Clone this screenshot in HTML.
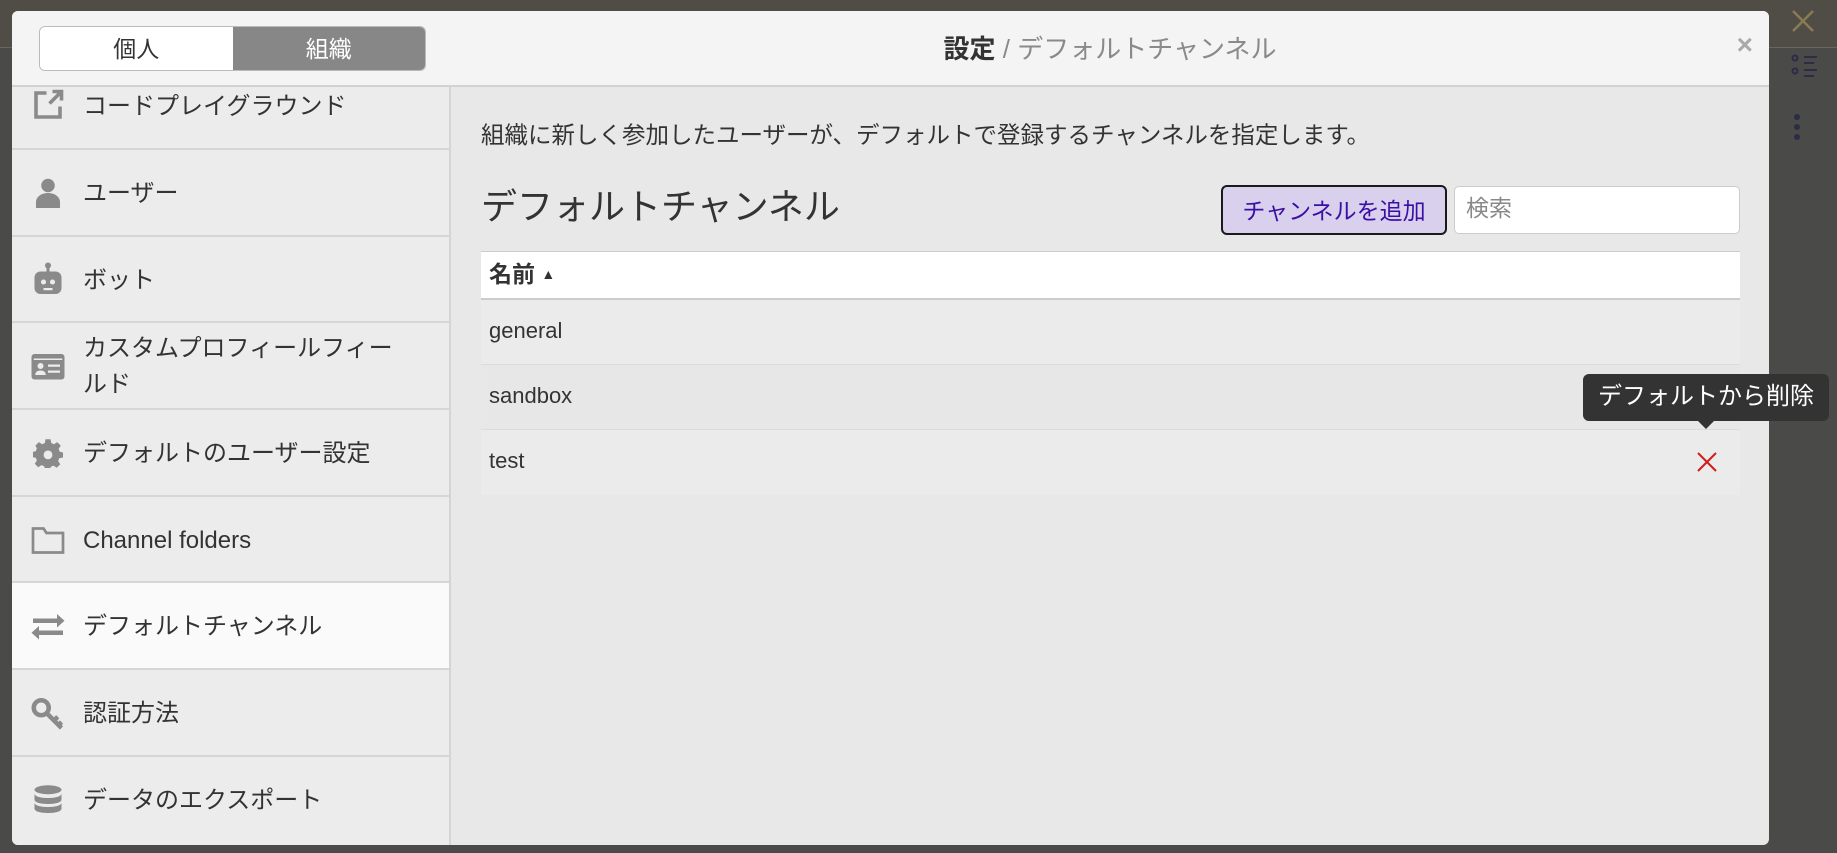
<!DOCTYPE html>
<html><head><meta charset="utf-8">
<style>
*{box-sizing:border-box;margin:0;padding:0}
body{width:1837px;height:853px;overflow:hidden;background:#4a4a48;font-family:"Liberation Sans","Noto Sans CJK JP",sans-serif;position:relative;color:#333}
.bgtop{position:absolute;left:0;top:0;width:1837px;height:48px;background:#4f4d46;border-bottom:1px solid #6a665a}
.modal{position:absolute;left:12px;top:11px;width:1757px;height:834px;border-radius:6px;overflow:hidden;background:#e8e8e8}
.hdr{position:absolute;left:0;top:0;width:100%;height:76px;background:#f4f4f4;border-bottom:2px solid #d2d2d2}
.tog{position:absolute;left:27px;top:15px;width:387px;height:45px;border:1px solid #bbb;border-radius:6px;overflow:hidden;display:flex}
.tog div{flex:1;text-align:center;font-size:23px;line-height:44px}
.tog .a{background:#fff;color:#333}
.tog .b{background:#878787;color:#fff}
.title{position:absolute;left:439px;right:0;top:18px;text-align:center;font-size:26px;color:#8a8a8a}
.title b{color:#333}
.close{position:absolute;right:16px;top:18px;font-size:28px;color:#aaa;font-weight:bold}
.side{position:absolute;left:0;top:76px;width:439px;bottom:0;background:#ececec;border-right:2px solid #d4d4d4}
.it{position:absolute;left:0;width:437px;border-bottom:2px solid #d6d6d6;display:flex;align-items:center;font-size:24px;color:#333}
.it svg{position:absolute;left:18px;width:36px;height:36px}
.it span{position:absolute;left:71px;line-height:36px;top:26px}
.act{background:#fafafa}
.main{position:absolute;left:439px;top:76px;right:0;bottom:0}
.desc{position:absolute;left:30px;top:29px;font-size:23.5px;color:#333}
.h2{position:absolute;left:30px;top:91px;font-size:36px;color:#333}
.btn{position:absolute;left:770px;top:98px;width:226px;height:50px;background:#d8d0ec;border:2px solid #1a1a1a;border-radius:6px;color:#3b0fa5;font-size:23px;display:flex;align-items:center;justify-content:center;padding-bottom:3px}
.srch{position:absolute;left:1003px;top:99px;width:286px;height:48px;background:#fff;border:1px solid #ccc;border-radius:5px;font-size:23px;color:#888;padding-left:11px;line-height:43px}
.tbl{position:absolute;left:30px;top:164px;width:1259px}
.th{height:49px;background:#fff;border-top:1px solid #ccc;border-bottom:2px solid #ccc;font-size:23px;font-weight:bold;padding-left:8px;line-height:44px}
.tr{height:65px;border-bottom:1px solid #dcdcdc;font-size:22px;padding-left:8px;line-height:62px;position:relative}
.tip{position:absolute;left:1583px;top:374px;width:246px;height:47px;background:#333;border-radius:6px;color:#fff;font-size:24px;text-align:center;line-height:46px}
.tip:after{content:"";position:absolute;left:115px;top:47px;border:8px solid transparent;border-top-color:#333;border-bottom:0}
</style></head><body>
<div class="bgtop"></div>
<svg style="position:absolute;left:1790px;top:8px" width="26" height="26"><path d="M3 3L23 23M23 3L3 23" stroke="#8a7a55" stroke-width="2.5"/></svg>
<svg style="position:absolute;left:1790px;top:52px" width="34" height="34" fill="none" stroke="#2c2c44" stroke-width="2"><circle cx="5" cy="6" r="2.5"/><circle cx="5" cy="19" r="2.5"/><path d="M14 5h13M14 11h10M14 18h13M14 24h10"/></svg>
<svg style="position:absolute;left:1790px;top:112px" width="14" height="34" fill="#2c2c44"><circle cx="7" cy="5" r="3"/><circle cx="7" cy="15" r="3"/><circle cx="7" cy="25" r="3"/></svg>
<div class="modal">
 <div class="hdr">
  <div class="tog"><div class="a">個人</div><div class="b">組織</div></div>
  <div class="title"><b>設定</b> / デフォルトチャンネル</div>
  <div class="close">×</div>
 </div>
 <div class="side">
  <div class="it" style="top:-20px;height:83px"><svg viewBox="0 0 24 24" fill="none" stroke="#8a8a8a" stroke-width="2.4" style="top:20px"><path d="M11 4H4v16h16v-7"/><path d="M13 11l8-8M15 3h6v6"/></svg><span style="top:22px">コードプレイグラウンド</span></div>
  <div class="it" style="top:63px;height:87px"><svg viewBox="0 0 24 24" fill="#8a8a8a"><circle cx="12" cy="7" r="4.5"/><path d="M4 22v-4c0-3 3-6 8-6s8 3 8 6v4z"/></svg><span>ユーザー</span></div>
  <div class="it" style="top:150px;height:86px"><svg viewBox="0 0 24 24" fill="#8a8a8a"><circle cx="12" cy="3" r="2"/><rect x="11" y="3" width="2" height="5"/><rect x="3" y="7" width="18" height="15" rx="4"/><circle cx="9" cy="14" r="1.7" fill="#ececec"/><circle cx="15" cy="14" r="1.7" fill="#ececec"/><rect x="9" y="18" width="6" height="1.5" fill="#ececec"/></svg><span>ボット</span></div>
  <div class="it" style="top:236px;height:87px"><svg viewBox="0 0 24 24" fill="#8a8a8a"><rect x="1" y="4" width="22" height="17" rx="2"/><rect x="2.5" y="7" width="19" height="1" fill="#ececec"/><circle cx="7" cy="12" r="2" fill="#ececec"/><path d="M3.5 18c0-2 1.5-3 3.5-3s3.5 1 3.5 3z" fill="#ececec"/><rect x="12" y="11" width="8" height="1.5" fill="#ececec"/><rect x="12" y="15" width="8" height="1.5" fill="#ececec"/></svg><span style="top:8px;line-height:36px">カスタムプロフィールフィー<br>ルド</span></div>
  <div class="it" style="top:323px;height:87px"><svg viewBox="0 0 24 24" fill="#8a8a8a" style="width:30px;height:30px;left:21px"><path d="M10 1h4l.6 3 2.2 1 2.6-1.7 2.8 2.8L20.5 8.7l.9 2.3 2.6.6v4l-3 .6-.9 2.2 1.7 2.6-2.8 2.8-2.6-1.7-2.2.9-.6 2.6h-4l-.6-3-2.2-.9-2.6 1.7-2.8-2.8 1.7-2.6-.9-2.2-3-.6v-4l3-.6.9-2.3L1.9 6.1l2.8-2.8 2.6 1.7 2.2-1z"/><circle cx="12" cy="13.5" r="3.5" fill="#ececec"/></svg><span>デフォルトのユーザー設定</span></div>
  <div class="it" style="top:410px;height:86px"><svg viewBox="0 0 24 24" fill="none" stroke="#8a8a8a" stroke-width="1.8"><path d="M2 5h7l2 3h11v13H2z"/></svg><span>Channel folders</span></div>
  <div class="it act" style="top:496px;height:87px"><svg viewBox="0 0 24 24" fill="#8a8a8a"><path d="M2 7h16V4l5 4.5-5 4.5v-3H2z"/><path d="M22 15H6v-3l-5 4.5L6 21v-3h16z"/></svg><span>デフォルトチャンネル</span></div>
  <div class="it" style="top:583px;height:87px"><svg viewBox="0 0 24 24" fill="none" stroke="#8a8a8a" stroke-width="3"><circle cx="7.5" cy="8.5" r="5"/><path d="M11 12l10 10M16 17l2.5-2.5M19 20l2-2"/></svg><span>認証方法</span></div>
  <div class="it" style="top:670px;height:87px;border:0"><svg viewBox="0 0 24 24" fill="#8a8a8a"><ellipse cx="12" cy="4.5" rx="9" ry="3"/><path d="M3 7c0 2 4 3 9 3s9-1 9-3v4c0 2-4 3-9 3s-9-1-9-3z"/><path d="M3 13c0 2 4 3 9 3s9-1 9-3v4c0 2-4 3-9 3s-9-1-9-3z"/></svg><span>データのエクスポート</span></div>
 </div>
 <div class="main">
  <div class="desc">組織に新しく参加したユーザーが、デフォルトで登録するチャンネルを指定します。</div>
  <div class="h2">デフォルトチャンネル</div>
  <div class="btn">チャンネルを追加</div>
  <div class="srch">検索</div>
  <div class="tbl">
   <div class="th">名前 <span style="font-size:14px;vertical-align:3px">▲</span></div>
   <div class="tr" style="background:#ebebeb">general</div>
   <div class="tr" style="background:#e7e7e7">sandbox</div>
   <div class="tr" style="background:#ebebeb;border:0">test<svg style="position:absolute;left:1215px;top:21px" width="22" height="22"><path d="M2 2L20 20M20 2L2 20" stroke="#d01c1c" stroke-width="2"/></svg></div>
  </div>
 </div>
</div>
<div class="tip">デフォルトから削除</div>
</body></html>
